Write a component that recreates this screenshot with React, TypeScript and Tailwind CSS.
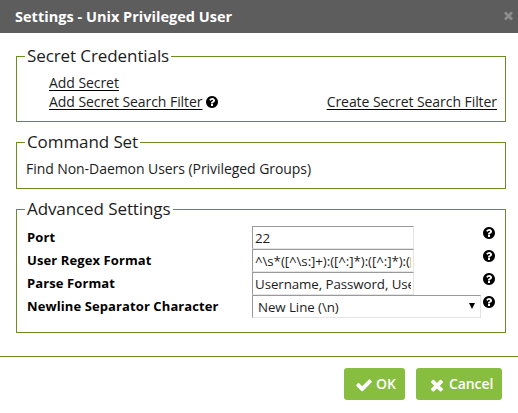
import type { ReactNode } from "react";

function Glyph({ d, className }: { d: string; className: string }) {
  return (
    <svg viewBox="0 0 1792 1792" className={`shrink-0 fill-current ${className}`} aria-hidden="true">
      <path d={d} />
    </svg>
  );
}

const TIMES =
  "M1490 1322q0 40-28 68l-136 136q-28 28-68 28t-68-28l-294-294-294 294q-28 28-68 28t-68-28l-136-136q-28-28-28-68t28-68l294-294-294-294q-28-28-28-68t28-68l136-136q28-28 68-28t68 28l294 294 294-294q28-28 68-28t68 28l136 136q28 28 28 68t-28 68l-294 294 294 294q28 28 28 68z";
const CHECK =
  "M1671 566q0 40-28 68l-724 724-136 136q-28 28-68 28t-68-28l-136-136-362-362q-28-28-28-68t28-68l136-136q28-28 68-28t68 28l294 295 656-657q28-28 68-28t68 28l136 136q28 28 28 68z";
const QUESTION =
  "M1024 1376v-192q0-14-9-23t-23-9h-192q-14 0-23 9t-9 23v192q0 14 9 23t23 9h192q14 0 23-9t9-23zm256-672q0-88-55.5-163t-138.5-116-170-41q-243 0-371 213-15 24 8 42l132 100q7 6 19 6 16 0 25-12 53-68 86-92 34-24 86-24 48 0 85.5 26t37.5 59q0 38-20 61t-68 45q-63 28-115.5 86.5t-52.5 125.5v36q0 14 9 23t23 9h192q14 0 23-9t9-23q0-19 21.5-49.5t54.5-49.5q32-18 49-28.5t46-35 44.5-48 28-60.5 12.5-81zm384 192q0 209-103 385.5t-279.5 279.5-385.5 103-385.5-103-279.5-279.5-103-385.5 103-385.5 279.5-279.5 385.5-103 385.5 103 279.5 279.5 103 385.5z";

function Section({ title, className, children }: { title: string; className: string; children: ReactNode }) {
  return (
    <section className={`ml-4 w-[490px] border border-[#6b8e23] ${className}`}>
      <h2 className="-mt-[13px] ml-2 flex h-6 w-fit items-center bg-white pr-[2px] pl-[2px] text-[17px] leading-6 tracking-[-0.09px] whitespace-nowrap text-[#1c1c1c]">
        {title}
      </h2>
      {children}
    </section>
  );
}

function Row({ label, children }: { label: string; children: ReactNode }) {
  return (
    <div className="flex h-[23px] items-start">
      <label className="w-[226px] pt-px pl-px text-[13px] leading-[21px] font-bold tracking-[0.1px] whitespace-nowrap text-black">
        {label}
      </label>
      <div className="w-[230px]">{children}</div>
      <Glyph d={QUESTION} className="size-[14px] text-black" />
    </div>
  );
}

function TextField({ value }: { value: string }) {
  return (
    <input
      readOnly
      value={value}
      className="block h-[23px] w-[162px] border border-t-[#999] border-r-[#e5e5e5] border-b-[#e5e5e5] border-l-[#999] bg-white pr-[2px] pl-[2px] pt-px text-[13.33px] tracking-[-0.08px] outline-none"
    />
  );
}

export default function App() {
  return (
    <div className="h-[413px] w-[518px] overflow-hidden bg-white font-['Open_Sans','Noto_Sans',sans-serif] text-[14px] text-[#1c1c1c]">
      <header className="flex h-[33px] items-center justify-between bg-[#5d5d5d] pr-[3px] pl-[15px] text-white">
        <h1 className="text-[14.5px] leading-5 font-bold tracking-[0.02px] whitespace-nowrap">Settings - Unix Privileged User</h1>
        <Glyph d={TIMES} className="-mt-[2px] size-[13px] text-[#8c8c8c]" />
      </header>

      <Section title="Secret Credentials" className="mt-[23px] h-[66px]">
        <div className="mt-[5px] pr-[8px] pl-8 leading-[19px] tracking-[-0.06px]">
          <div className="h-[19px]">
            <a className="underline decoration-black underline-offset-2">Add Secret</a>
          </div>
          <div className="flex h-[19px] items-center">
            <a className="underline decoration-black underline-offset-2">Add Secret Search Filter</a>
            <Glyph d={QUESTION} className="ml-[3px] size-[14px] text-black" />
            <a className="ml-auto underline decoration-black underline-offset-2">Create Secret Search Filter</a>
          </div>
        </div>
      </Section>

      <Section title="Command Set" className="mt-5 h-[47px]">
        <p className="mt-[5px] ml-[9px] leading-[19px] tracking-[-0.06px] whitespace-nowrap">
          Find Non-Daemon Users (Privileged Groups)
        </p>
      </Section>

      <Section title="Advanced Settings" className="mt-5 h-[124px]">
        <div className="mt-[5px] ml-[9px]">
          <Row label="Port">
            <TextField value="22" />
          </Row>
          <Row label="User Regex Format">
            <TextField value="^\s*([^\s:]+):([^:]*):([^:]*):([^:]*)" />
          </Row>
          <Row label="Parse Format">
            <TextField value="Username, Password, UserId" />
          </Row>
          <Row label="Newline Separator Character">
            <div className="flex h-[23px] w-[229px] items-center justify-between border border-t-[#999] border-r-[#e5e5e5] border-b-[#e5e5e5] border-l-[#999] pr-[5px] pl-[5px] text-[13.33px]">
              <span className="pt-[2px] tracking-[-0.08px]">New Line (\n)</span>
              <svg viewBox="0 0 6 6" className="-mt-[2px] size-[6px]">
                <path d="M0 0h6L3 6z" />
              </svg>
            </div>
          </Row>
        </div>
      </Section>

      <footer className="mt-[23px] flex justify-end gap-[11px] border-t border-[#6b8e23] pt-[11px] pr-4 text-[14px] font-semibold text-white">
        <button className="flex h-8 w-[61px] items-center rounded-[3px] bg-[#88be40] pl-[11px]">
          <Glyph d={CHECK} className="mt-[2px] size-[18px]" />
          <span className="ml-[3px] -mt-px">OK</span>
        </button>
        <button className="flex h-8 w-[86px] items-center rounded-[3px] bg-[#88be40] pl-3">
          <Glyph d={TIMES} className="mt-[2px] size-[18px]" />
          <span className="ml-[3px] -mt-px tracking-[-0.1px]">Cancel</span>
        </button>
      </footer>
    </div>
  );
}
